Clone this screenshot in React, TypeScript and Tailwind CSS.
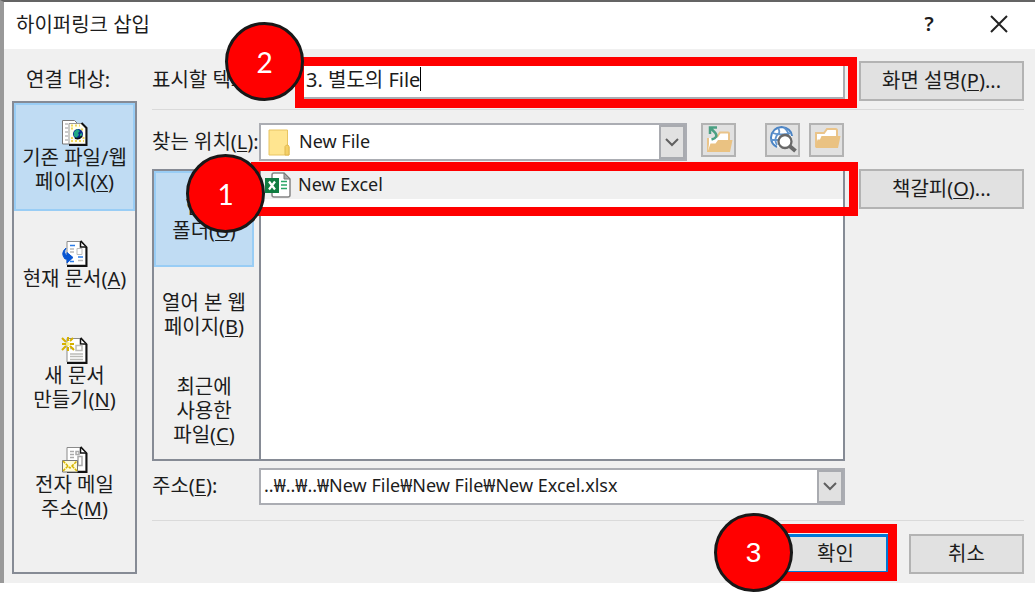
import { useState, type ReactNode } from "react";

const sans = "font-[family-name:'Noto_Sans','Noto_Sans_CJK_KR',sans-serif]";

function Key({ k }: { k: string }) {
  return (
    <>
      (<span className="underline decoration-1 underline-offset-2">{k}</span>)
    </>
  );
}

function Badge({ children, className }: { children: ReactNode; className: string }) {
  return (
    <span
      className={`pointer-events-none absolute z-20 flex size-[79px] items-center justify-center rounded-full border-3 border-[#181818] bg-[#ff0000] text-[28px] leading-none text-white ${className}`}
    >
      {children}
    </span>
  );
}

function Frame({ className }: { className: string }) {
  return <span className={`pointer-events-none absolute z-10 border-9 border-[#ff0000] ${className}`} />;
}

function PageShape() {
  return (
    <>
      <path d="M6 1.5h14l5 5V25H6z" fill="#fff" stroke="#8a8a8a" />
      <path d="M19.500 1l6 6.500V26H6" fill="none" stroke="#111" strokeWidth="2" />
      <path d="M19.500 2v5h5" fill="#fff" stroke="#111" strokeWidth="1.500" />
    </>
  );
}

function WebPageIcon() {
  return (
    <svg viewBox="0 0 27 27" className="size-[27px]" aria-hidden="true">
      <path d="M1.500 1.500h12l3 3V25h-15z" fill="#fff" stroke="#777" />
      <path d="M4 5h3M4 9h3M4 13h3M4 17h3M4 21h3" stroke="#bbb" strokeWidth="1.500" />
      <path d="M8 4.500h13l4 4V25H8z" fill="#fffef0" stroke="#999" />
      <path d="M20.500 4l5 5v17H8" fill="none" stroke="#111" strokeWidth="2" />
      <path d="M10 6.500h9M10 9.500h3M20 10.500h3M10 22h13M10 19h2M21.500 19h2" stroke="#f2d85c" strokeWidth="2" strokeDasharray="2 2" />
      <circle cx="17" cy="15" r="5" fill="#082c8c" />
      <path d="M13 13l3-3 3 2-2 2 1 2-3 3-2-2zM19 15l2-1v3l-2 1z" fill="#22a884" />
      <path d="M14 19q4 2 7-2" stroke="#111" strokeWidth="1.500" fill="none" />
    </svg>
  );
}

function CurrentDocIcon() {
  return (
    <svg viewBox="0 0 27 27" className="size-[27px]" aria-hidden="true">
      <PageShape />
      <path d="M9 5.500h5M17 17h5M9 21.500h4" stroke="#2d7de8" strokeWidth="1.500" />
      <path d="M9 9h4M9 12h4M17 20.500h5" stroke="#bbb" strokeWidth="1.500" />
      <path d="M16 8.500h5v6h-5z" fill="#fff" stroke="#bbb" />
      <path d="M5 8Q-1 13 4 19h2v4l6-5.500-6-5V16Q2 13 5 8z" fill="#0755d2" stroke="#0755d2" />
    </svg>
  );
}

function NewDocIcon() {
  return (
    <svg viewBox="0 0 27 27" className="size-[27px]" aria-hidden="true">
      <PageShape />
      <path d="M15 8.500h6v5h-6zM9 11.500h4M9 17h13M9 19.500h13M9 22.500h13" fill="none" stroke="#bcbcb8" strokeWidth="1.500" />
      <path d="M1 7h4M7 0v4M7 10v4M1 1l4 4M12 1L9 4M1 13l4-4M9 9l4 4M9 7h4" stroke="#d5b000" strokeWidth="2" />
      <circle cx="7" cy="7" r="2" fill="#fff27a" />
    </svg>
  );
}

function MailIcon() {
  return (
    <svg viewBox="0 0 27 27" className="size-[27px]" aria-hidden="true">
      <PageShape />
      <path d="M9 5.500h4M9 8.500h4M9 11.500h4M15 5.500h3v3h-3zM17 10.500h4v9h-4z" fill="none" stroke="#aaa" strokeWidth="1.500" />
      <path d="M1.500 14.500h15V26h-15z" fill="#fffbd8" stroke="#777" />
      <path d="M2 15l7 7 7-7M2 25l5-5M16 25l-5-5" fill="none" stroke="#d6b400" strokeWidth="1.500" strokeDasharray="3 1" />
    </svg>
  );
}

function ListFolderIcon() {
  return (
    <svg viewBox="0 0 22 27" className="h-[27px] w-[22px]" aria-hidden="true">
      <path d="M1 1h18.500v15.500l1.500 1.500v8H1z" fill="#ffe590" stroke="#e8c462" />
      <path d="M17 26v-8.500l1.500-1.500h1.500l1 1.500V26z" fill="#f5d067" stroke="#e0b850" />
    </svg>
  );
}

function ExcelIcon() {
  return (
    <svg viewBox="0 0 26 26" className="size-[26px] shrink-0" aria-hidden="true">
      <path d="M9 1h10l6 6v16q0 2-2 2H9q-2 0-2-2V3q0-2 2-2z" fill="#fff" stroke="#858585" strokeWidth="1.500" />
      <path d="M19 1v6h6z" fill="#aaa" stroke="#777" />
      <path d="M16 9.500h6M16 13h6M16 16.500h6" stroke="#28a565" strokeWidth="1.500" />
      <path d="M0 6h14v15H0z" fill="#107c41" />
      <path d="M4 9.500l6 8M10 9.500l-6 8" stroke="#fff" strokeWidth="2.200" />
    </svg>
  );
}

function FolderIcon() {
  return (
    <svg viewBox="0 0 29 29" className="size-[29px] shrink-0" aria-hidden="true">
      <path d="M4 21V7h8l3-4h8.500q1.500 0 1.500 1.500V12" fill="#fff" stroke="#eac48a" strokeWidth="2" />
      <path d="M9.500 10H28.500l-2.500 12H3.500l2-8.500h2.500z" fill="#eac282" />
    </svg>
  );
}

function UpFolderIcon() {
  return (
    <svg viewBox="0 0 29 29" className="size-[29px] shrink-0" aria-hidden="true">
      <path d="M4 24V12h9l3-5h8.500v9L5 24z" fill="#fff" />
      <path d="M13 11l3-4.500h8q1 0 1 1V15" fill="none" stroke="#eac48a" strokeWidth="2" />
      <path d="M3 12h2v6l-1 8H3z" fill="#eac48a" />
      <path d="M14 14h14.500l-2.500 12H3.500l3-8.500h5z" fill="#eac282" />
      <path d="M6 8V1.500h7M6 1.500l5 5q4 5-3.500 7" fill="none" stroke="#4ba083" strokeWidth="2.500" />
    </svg>
  );
}

function WebSearchIcon() {
  return (
    <svg viewBox="0 0 29 29" className="size-[29px] shrink-0" aria-hidden="true">
      <circle cx="13.500" cy="11.500" r="10.500" fill="#fff" />
      <path d="M9 21Q3 18 3 11.500 4 2 13.500 1q9.500 1 10.500 9" fill="none" stroke="#4b84c4" strokeWidth="2" />
      <path d="M10 2q2 3 1 5-6 5-2 12M16 1.500q5 4 4.500 9M4.500 7q9 3 18 0M3 14h7" fill="none" stroke="#5f93cd" strokeWidth="1.800" />
      <path d="M21 19.500l6.500 5.500" stroke="#686868" strokeWidth="4" />
      <circle cx="17" cy="15.500" r="6.500" fill="#fff" stroke="#686868" strokeWidth="2.300" />
    </svg>
  );
}

function Chevron() {
  return (
    <svg viewBox="0 0 14 9" className="h-[9px] w-[14px] shrink-0" aria-hidden="true">
      <path d="M1 1l6 6 6-6" fill="none" stroke="#606060" strokeWidth="2" />
    </svg>
  );
}

const dropButton = "flex w-[26px] shrink-0 items-center justify-center border-2 border-[#a9abb0] bg-[#e1e1e1]";
const pushButton = "flex h-10 items-center justify-center border-2 border-[#b3b3b3] bg-[#e1e1e1]";
const iconButton = "flex h-[34px] w-[35px] shrink-0 items-center justify-center border-2 border-[#b3b3b3] bg-[#e1e1e1]";
const selected = "border-2 border-[#99cdf5] bg-[#c0dcf3]";
const idle = "border-2 border-transparent";

const targets = [
  { icon: <WebPageIcon />, label: <>기존 파일/웹<br />페이지<Key k="X" /></> },
  { icon: <CurrentDocIcon />, label: <>현재 문서<Key k="A" /></> },
  { icon: <NewDocIcon />, label: <>새 문서<br />만들기<Key k="N" /></> },
  { icon: <MailIcon />, label: <>전자 메일<br />주소<Key k="M" /></> },
];

const places = [
  <>현재<br />폴더<Key k="U" /></>,
  <>열어 본 웹<br />페이지<Key k="B" /></>,
  <>최근에<br />사용한<br />파일<Key k="C" /></>,
];

export default function App() {
  const [target, setTarget] = useState(0);
  const [place, setPlace] = useState(0);
  const [text, setText] = useState("3. 별도의 File");
  const [address, setAddress] = useState("..₩..₩..₩New File₩New File₩New Excel.xlsx");

  return (
    <div className={`min-h-screen bg-white text-[20px] leading-6 text-[#1c1c1c] ${sans}`}>
      <main className="border-t-2 border-l-4 border-t-[#646464] border-l-[#999] bg-[#f0f0f0]">
        <header className="flex h-[47px] items-center bg-white pr-[27px] pl-3">
          <h1 className="flex-1 pb-[2px]">하이퍼링크 삽입</h1>
          <button type="button" aria-label="도움말" className="mr-[53px] w-4 pb-1 font-semibold">?</button>
          <button type="button" aria-label="닫기" className="pb-1">
            <svg viewBox="0 0 18 18" className="size-[18px]" aria-hidden="true">
              <path d="M1 1l16 16M17 1L1 17" stroke="#222" strokeWidth="2" />
            </svg>
          </button>
        </header>

        <div className="flex pt-3 pr-[11px] pb-[9px] pl-2">
          <nav className="flex w-[125px] shrink-0 flex-col" aria-labelledby="targets">
            <h2 id="targets" className="flex h-10 items-center pb-[2px] pl-[14px]">연결 대상:</h2>
            <div className="flex flex-1 flex-col gap-px border-2 border-[#868b95]">
              {targets.map((t, i) => (
                <button
                  key={i}
                  type="button"
                  onClick={() => setTarget(i)}
                  className={`flex h-[108px] flex-col items-center justify-center pb-[2px] whitespace-nowrap ${i === target ? selected : idle}`}
                >
                  {t.icon}
                  <span>{t.label}</span>
                </button>
              ))}
            </div>
          </nav>

          <div className="ml-[15px] min-w-0 flex-1">
            <div className="flex h-10 items-center">
              <label htmlFor="display" className="w-[148px] shrink-0 pb-[2px] whitespace-nowrap">
                표시할 텍스트<Key k="T" />:
              </label>
              <div className="relative flex h-9 min-w-0 flex-1 items-center border-2 border-[#abadb3] bg-white pl-1">
                <input
                  id="display"
                  value={text}
                  onChange={(e) => setText(e.target.value)}
                  className="h-8 max-w-full bg-transparent pb-[6px] outline-none [field-sizing:content]"
                />
                <span className="mb-1 h-6 w-px bg-black" />
                <Frame className="-top-[8px] -right-[14px] -left-[7px] h-[51px]" />
                <Badge className="-top-[43px] -left-[77px] font-[family-name:Lato,sans-serif]">2</Badge>
              </div>
              <button type="button" className={`${pushButton} ml-[14px] w-[165px] shrink-0`}>
                <span>화면 설명<Key k="P" />...</span>
              </button>
            </div>

            <hr className="mt-2 border-[#dadada]" />

            <div className="mt-[13px] flex h-[38px] items-start">
              <label htmlFor="location" className="w-[107px] shrink-0 self-center whitespace-nowrap">
                찾는 위치<Key k="L" />:
              </label>
              <div className="relative flex h-[38px] min-w-0 flex-1 border-2 border-[#abadb3] bg-white">
                <span className="pointer-events-none absolute top-1 left-[7px]"><ListFolderIcon /></span>
                <select id="location" className="min-w-0 flex-1 appearance-none bg-transparent pb-[2px] pl-[38px] text-[18px] outline-none">
                  <option>New File</option>
                </select>
                <span className={`${dropButton} pointer-events-none`}><Chevron /></span>
              </div>
              <button type="button" aria-label="상위 폴더" className={`${iconButton} ml-[14px]`}><UpFolderIcon /></button>
              <button type="button" aria-label="웹 검색" className={`${iconButton} ml-[29px]`}><WebSearchIcon /></button>
              <button type="button" aria-label="파일 찾아보기" className={`${iconButton} ml-[9px]`}><FolderIcon /></button>
              <span className="w-[180px] shrink-0" />
            </div>

            <div className="mt-2 flex h-[292px]">
              <div className="grid w-[107px] shrink-0 grid-rows-3 border-2 border-r-0 border-[#868b95] pr-[5px]">
                {places.map((label, i) => (
                  <button key={i} type="button" onClick={() => setPlace(i)} className={`whitespace-nowrap ${i === place ? selected : idle}`}>
                    {label}
                  </button>
                ))}
              </div>
              <div className="relative min-w-0 flex-1 border-2 border-[#868b95] bg-white">
                <ul>
                  <li>
                    <button type="button" className="flex h-7 w-full items-center gap-[7px] bg-[#f0f0f0] pl-1 text-[18px]">
                      <ExcelIcon />
                      <span className="pb-[2px]">New Excel</span>
                    </button>
                  </li>
                </ul>
                <Frame className="-top-[9px] -right-[15px] -left-[10px] h-[54px]" />
                <Badge className="-top-[17px] -left-[75px] font-[family-name:Lato,sans-serif]">1</Badge>
              </div>
              <button type="button" className={`${pushButton} ml-[14px] w-[165px] shrink-0`}>
                <span>책갈피<Key k="O" />...</span>
              </button>
            </div>

            <div className="mt-[6px] flex h-[38px] items-center">
              <label htmlFor="address" className="w-[107px] shrink-0">주소<Key k="E" />:</label>
              <div className="flex h-[37px] min-w-0 flex-1 border-2 border-[#abadb3] bg-white">
                <input
                  id="address"
                  value={address}
                  onChange={(e) => setAddress(e.target.value)}
                  className="min-w-0 flex-1 bg-transparent pb-[2px] pl-[3px] text-[18px] outline-none"
                />
                <button type="button" aria-label="주소 목록" className={dropButton}><Chevron /></button>
              </div>
              <span className="w-[179px] shrink-0" />
            </div>

            <hr className="mt-[15px] border-[#dadada]" />

            <div className="mt-[13px] flex justify-end gap-5">
              <div className="relative">
                <button type="button" className="flex h-10 w-[115px] items-center justify-center border-3 border-[#0078d7] bg-[#e1e1e1] pl-2">확인</button>
                <Frame className="-top-[10px] -right-[8px] -left-[30px] h-[57px]" />
                <Badge className="-top-[21px] -left-[60px] font-[family-name:'Liberation_Sans',sans-serif]">3</Badge>
              </div>
              <button type="button" className={`${pushButton} w-[115px]`}>취소</button>
            </div>
          </div>
        </div>
      </main>
    </div>
  );
}
